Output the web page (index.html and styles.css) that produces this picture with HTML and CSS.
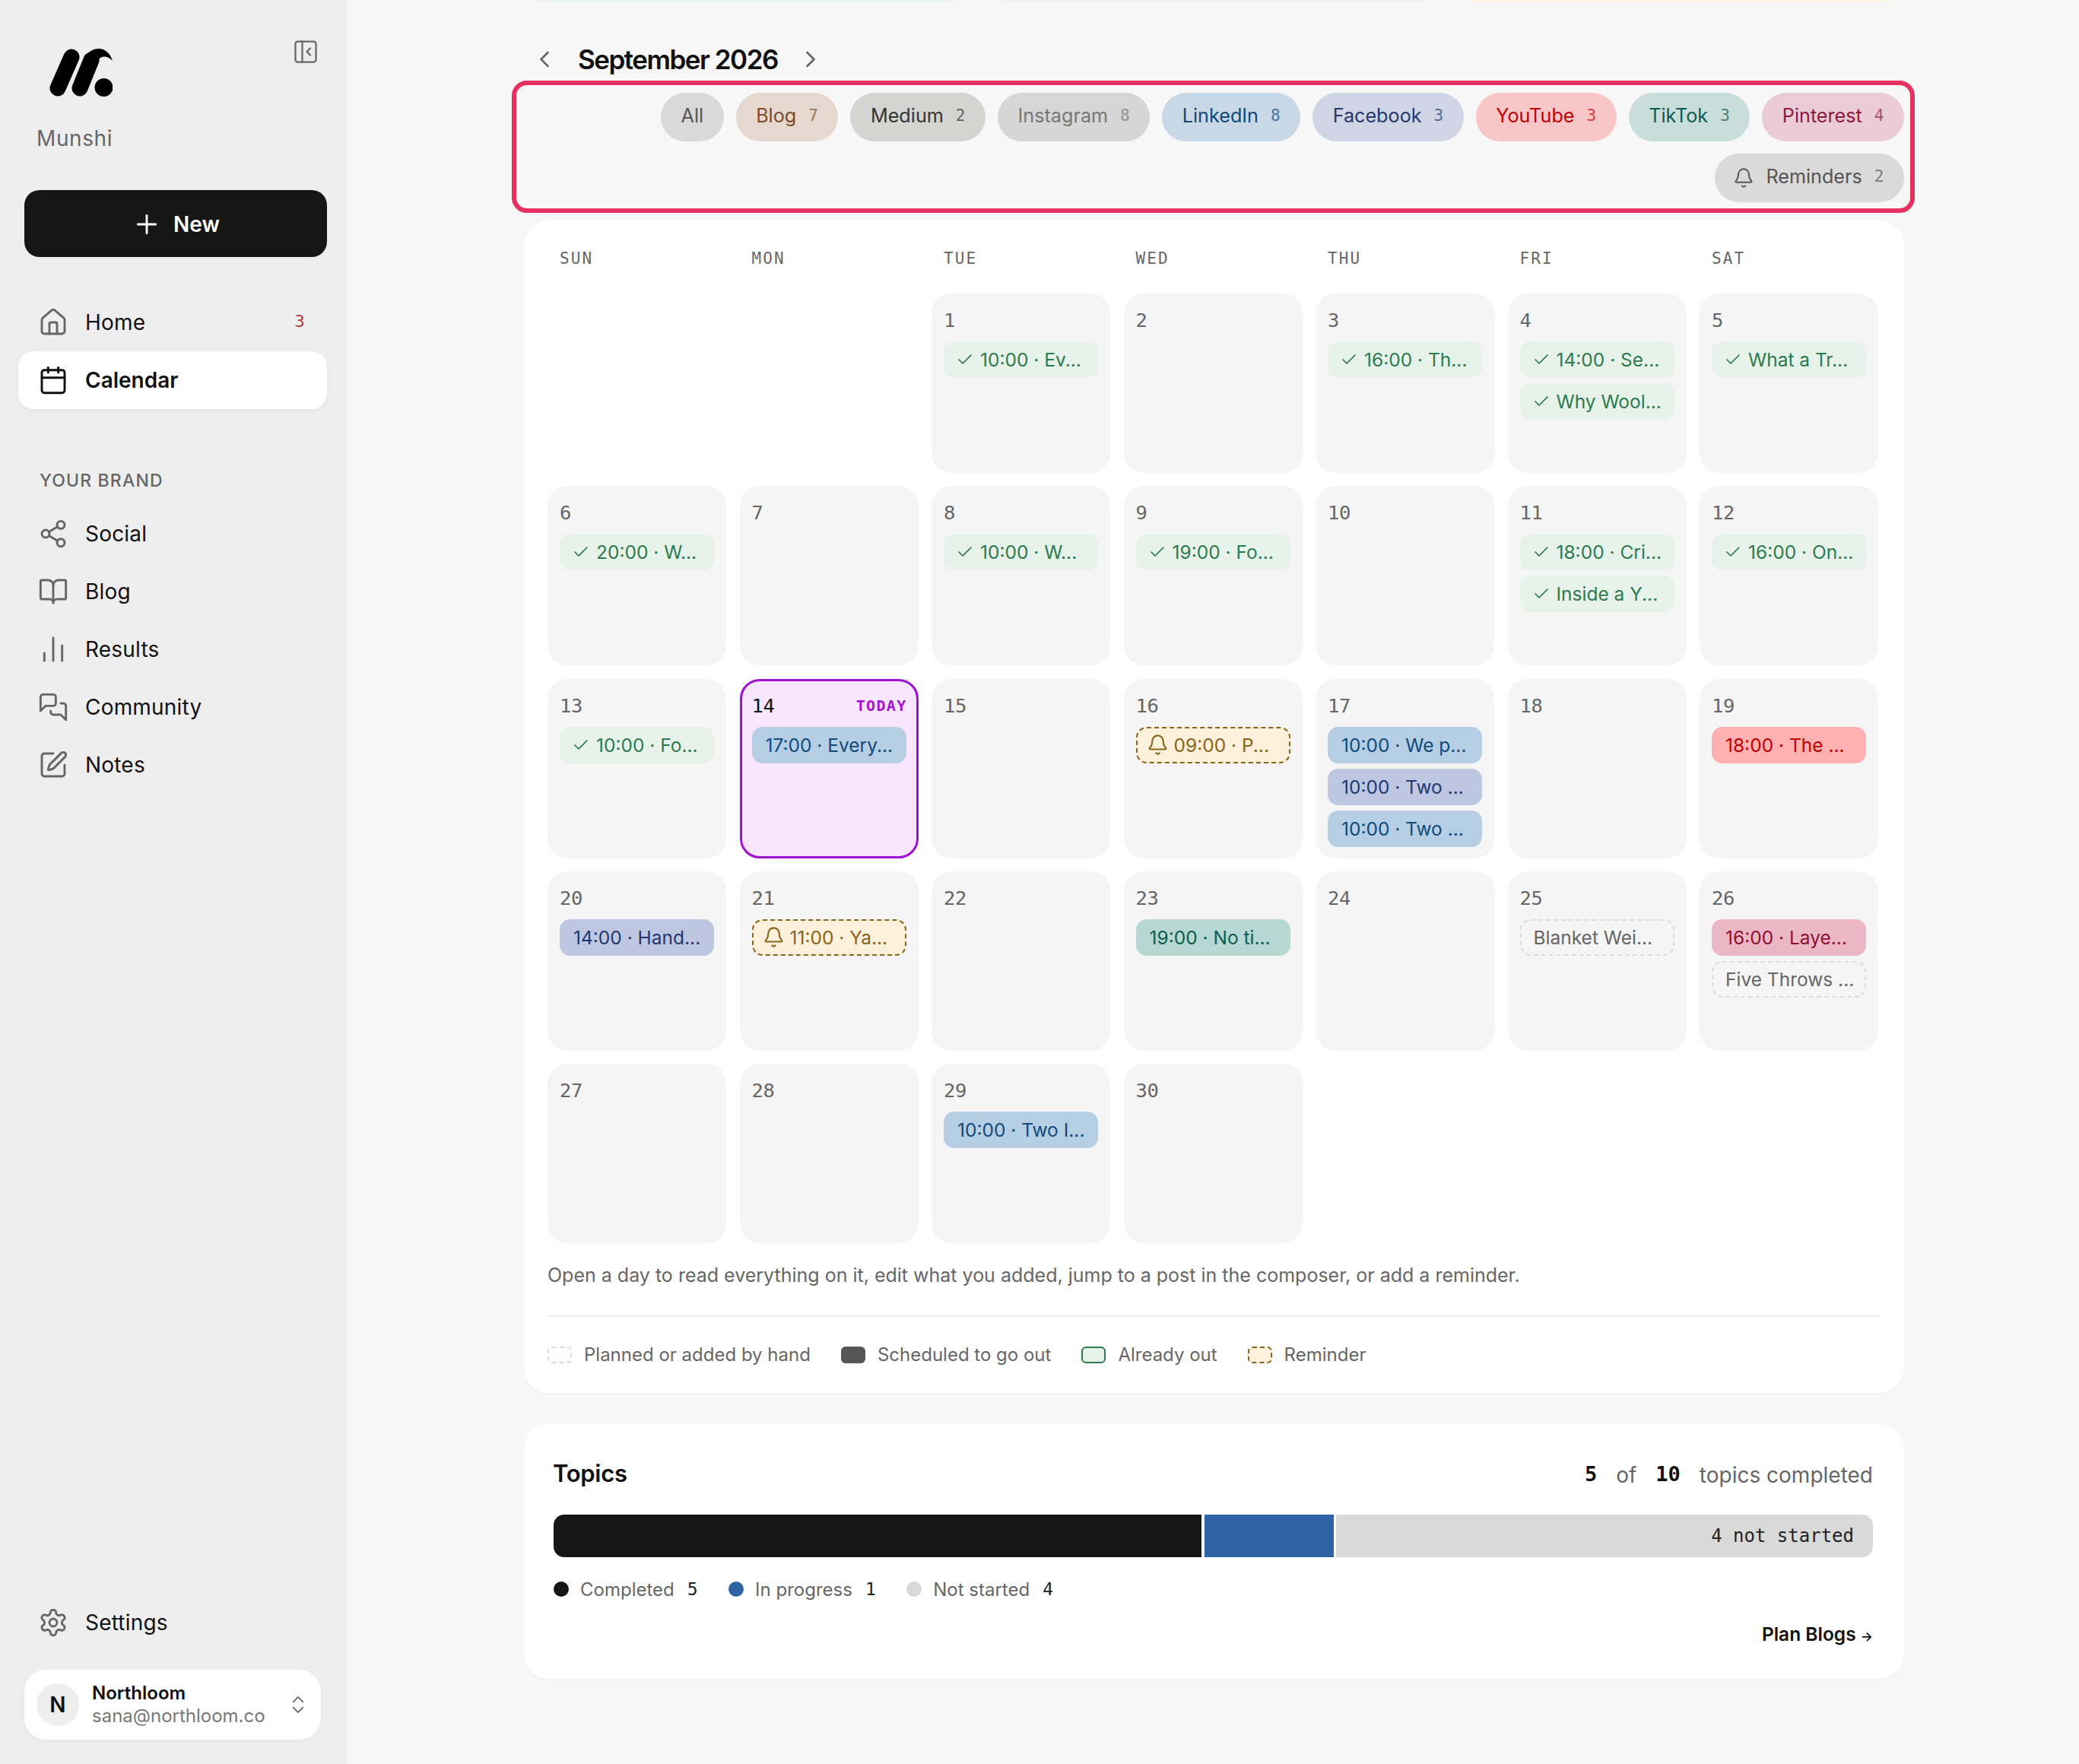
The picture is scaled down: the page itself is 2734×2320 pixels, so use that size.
FILE: index.html
```html
<!DOCTYPE html>
<html lang="en">
<head>
<meta charset="utf-8">
<title>Munshi Calendar</title>
<link rel="stylesheet" href="styles.css">
</head>
<body>
<svg class="defs" aria-hidden="true">
  <symbol id="i-home" viewBox="0 0 24 24"><path d="M15 21v-8a1 1 0 0 0-1-1h-4a1 1 0 0 0-1 1v8"/><path d="M3 10a2 2 0 0 1 .709-1.528l7-5.999a2 2 0 0 1 2.582 0l7 5.999A2 2 0 0 1 21 10v9a2 2 0 0 1-2 2H5a2 2 0 0 1-2-2z"/></symbol>
  <symbol id="i-cal" viewBox="0 0 24 24"><path d="M8 2v4"/><path d="M16 2v4"/><rect x="3" y="4" width="18" height="18" rx="2"/><path d="M3 10h18"/></symbol>
  <symbol id="i-share" viewBox="0 0 24 24"><circle cx="18" cy="5" r="3"/><circle cx="6" cy="12" r="3"/><circle cx="18" cy="19" r="3"/><path d="m8.59 13.51 6.83 3.98"/><path d="m15.41 6.51-6.82 3.98"/></symbol>
  <symbol id="i-book" viewBox="0 0 24 24"><path d="M12 7v14"/><path d="M3 18a1 1 0 0 1-1-1V4a1 1 0 0 1 1-1h5a4 4 0 0 1 4 4 4 4 0 0 1 4-4h5a1 1 0 0 1 1 1v13a1 1 0 0 1-1 1h-6a3 3 0 0 0-3 3 3 3 0 0 0-3-3z"/></symbol>
  <symbol id="i-chart" viewBox="0 0 24 24"><path d="M5 21v-6"/><path d="M12 21V3"/><path d="M19 21V9"/></symbol>
  <symbol id="i-msg" viewBox="0 0 24 24"><path d="M14 9a2 2 0 0 1-2 2H6l-4 4V4a2 2 0 0 1 2-2h8a2 2 0 0 1 2 2z"/><path d="M18 9h2a2 2 0 0 1 2 2v11l-4-4h-6a2 2 0 0 1-2-2v-1"/></symbol>
  <symbol id="i-pen" viewBox="0 0 24 24"><path d="M12 3H5a2 2 0 0 0-2 2v14a2 2 0 0 0 2 2h14a2 2 0 0 0 2-2v-7"/><path d="M18.375 2.625a1 1 0 0 1 3 3l-9.013 9.014a2 2 0 0 1-.853.505l-2.873.84a.5.5 0 0 1-.62-.62l.84-2.873a2 2 0 0 1 .506-.852z"/></symbol>
  <symbol id="i-gear" viewBox="0 0 24 24"><path d="M12.22 2h-.44a2 2 0 0 0-2 2v.18a2 2 0 0 1-1 1.73l-.43.25a2 2 0 0 1-2 0l-.15-.08a2 2 0 0 0-2.73.73l-.22.38a2 2 0 0 0 .73 2.73l.15.1a2 2 0 0 1 1 1.72v.51a2 2 0 0 1-1 1.74l-.15.09a2 2 0 0 0-.73 2.73l.22.38a2 2 0 0 0 2.73.73l.15-.08a2 2 0 0 1 2 0l.43.25a2 2 0 0 1 1 1.73V20a2 2 0 0 0 2 2h.44a2 2 0 0 0 2-2v-.18a2 2 0 0 1 1-1.73l.43-.25a2 2 0 0 1 2 0l.15.08a2 2 0 0 0 2.73-.73l.22-.39a2 2 0 0 0-.73-2.73l-.15-.08a2 2 0 0 1-1-1.74v-.5a2 2 0 0 1 1-1.74l.15-.09a2 2 0 0 0 .73-2.73l-.22-.38a2 2 0 0 0-2.73-.73l-.15.08a2 2 0 0 1-2 0l-.43-.25a2 2 0 0 1-1-1.73V4a2 2 0 0 0-2-2z"/><circle cx="12" cy="12" r="3"/></symbol>
  <symbol id="i-bell" viewBox="0 0 24 24"><path d="M10.268 21a2 2 0 0 0 3.464 0"/><path d="M3.262 15.326A1 1 0 0 0 4 17h16a1 1 0 0 0 .74-1.673C19.41 13.956 18 12.499 18 8A6 6 0 0 0 6 8c0 4.499-1.411 5.956-2.738 7.326"/></symbol>
  <symbol id="i-check" viewBox="0 0 24 24"><path d="M20 6 9 17l-5-5"/></symbol>
</svg>

<div class="app">
  <aside class="sidebar">
    <div class="brand">
      <div class="brand-id">
        <svg class="logo" viewBox="0 0 83 63" aria-label="Munshi logo">
          <path class="logo-stroke" d="M11 52 29 11"/>
          <path class="logo-stroke" d="M40 52 55 15"/>
          <path d="M47 10C52 3 59 0 65 0c8 0 15 6 18 16-7-7-14-7-19-1L50 40z"/>
          <circle cx="71.500" cy="51" r="12"/>
        </svg>
        <div class="brand-name">Munshi</div>
      </div>
      <svg class="ico collapse" viewBox="0 0 24 24"><rect x="3" y="3" width="18" height="18" rx="2"/><path d="M9 3v18"/><path d="m16 15-3-3 3-3"/></svg>
    </div>
    <button class="new-btn"><svg class="ico plus" viewBox="0 0 24 24"><path d="M5 12h14"/><path d="M12 5v14"/></svg><span>New</span></button>

    <nav class="nav">
      <a class="nav-item"><svg class="ico"><use href="#i-home"/></svg><span>Home</span><span class="nav-badge">3</span></a>
      <a class="nav-item active"><svg class="ico"><use href="#i-cal"/></svg><span>Calendar</span></a>
    </nav>

    <div class="nav-label">YOUR BRAND</div>
    <nav class="nav">
      <a class="nav-item"><svg class="ico"><use href="#i-share"/></svg><span>Social</span></a>
      <a class="nav-item"><svg class="ico"><use href="#i-book"/></svg><span>Blog</span></a>
      <a class="nav-item"><svg class="ico"><use href="#i-chart"/></svg><span>Results</span></a>
      <a class="nav-item"><svg class="ico"><use href="#i-msg"/></svg><span>Community</span></a>
      <a class="nav-item"><svg class="ico"><use href="#i-pen"/></svg><span>Notes</span></a>
    </nav>

    <nav class="nav nav-bottom">
      <a class="nav-item"><svg class="ico"><use href="#i-gear"/></svg><span>Settings</span></a>
    </nav>
    <div class="account">
      <div class="avatar">N</div>
      <div class="account-text">
        <div class="account-name">Northloom</div>
        <div class="account-mail">sana@northloom.co</div>
      </div>
      <svg class="ico updown" viewBox="0 0 24 24"><path d="m7 15 5 5 5-5"/><path d="m7 9 5-5 5 5"/></svg>
    </div>
  </aside>

  <main class="main">
    <div class="stat-row">
      <div class="stat stat-green"></div>
      <div class="stat stat-grey"></div>
      <div class="stat stat-yellow"></div>
    </div>

    <header class="month">
      <svg class="ico month-nav" viewBox="0 0 24 24"><path d="m15 18-6-6 6-6"/></svg>
      <h1 class="month-title">September 2026</h1>
      <svg class="ico month-nav" viewBox="0 0 24 24"><path d="m9 18 6-6-6-6"/></svg>
    </header>

    <div class="filters">
      <span class="pill p-all">All</span>
      <span class="pill p-blog">Blog<b>7</b></span>
      <span class="pill p-medium">Medium<b>2</b></span>
      <span class="pill p-insta">Instagram<b>8</b></span>
      <span class="pill p-li">LinkedIn<b>8</b></span>
      <span class="pill p-fb">Facebook<b>3</b></span>
      <span class="pill p-yt">YouTube<b>3</b></span>
      <span class="pill p-tt">TikTok<b>3</b></span>
      <span class="pill p-pin">Pinterest<b>4</b></span>
      <span class="pill p-rem"><svg class="ico pill-bell"><use href="#i-bell"/></svg>Reminders<b>2</b></span>
    </div>

    <section class="card cal-card">
      <div class="weekdays">
        <div>SUN</div><div>MON</div><div>TUE</div><div>WED</div><div>THU</div><div>FRI</div><div>SAT</div>
      </div>
      <div class="grid">
        <div></div><div></div>
        <div class="day"><div class="num">1</div><div class="ev done"><svg class="ico ev-check"><use href="#i-check"/></svg>10:00 · Ev...</div></div>
        <div class="day"><div class="num">2</div></div>
        <div class="day"><div class="num">3</div><div class="ev done"><svg class="ico ev-check"><use href="#i-check"/></svg>16:00 · Th...</div></div>
        <div class="day"><div class="num">4</div><div class="ev done"><svg class="ico ev-check"><use href="#i-check"/></svg>14:00 · Se...</div><div class="ev done"><svg class="ico ev-check"><use href="#i-check"/></svg>Why Wool...</div></div>
        <div class="day"><div class="num">5</div><div class="ev done"><svg class="ico ev-check"><use href="#i-check"/></svg>What a Tr...</div></div>

        <div class="day"><div class="num">6</div><div class="ev done"><svg class="ico ev-check"><use href="#i-check"/></svg>20:00 · W...</div></div>
        <div class="day"><div class="num">7</div></div>
        <div class="day"><div class="num">8</div><div class="ev done"><svg class="ico ev-check"><use href="#i-check"/></svg>10:00 · W...</div></div>
        <div class="day"><div class="num">9</div><div class="ev done"><svg class="ico ev-check"><use href="#i-check"/></svg>19:00 · Fo...</div></div>
        <div class="day"><div class="num">10</div></div>
        <div class="day"><div class="num">11</div><div class="ev done"><svg class="ico ev-check"><use href="#i-check"/></svg>18:00 · Cri...</div><div class="ev done"><svg class="ico ev-check"><use href="#i-check"/></svg>Inside a Y...</div></div>
        <div class="day"><div class="num">12</div><div class="ev done"><svg class="ico ev-check"><use href="#i-check"/></svg>16:00 · On...</div></div>

        <div class="day"><div class="num">13</div><div class="ev done"><svg class="ico ev-check"><use href="#i-check"/></svg>10:00 · Fo...</div></div>
        <div class="day today"><div class="num"><span>14</span><span class="today-tag">TODAY</span></div><div class="ev li">17:00 · Every...</div></div>
        <div class="day"><div class="num">15</div></div>
        <div class="day"><div class="num">16</div><div class="ev rem"><svg class="ico ev-bell"><use href="#i-bell"/></svg>09:00 · P...</div></div>
        <div class="day"><div class="num">17</div><div class="ev li">10:00 · We p...</div><div class="ev fb">10:00 · Two ...</div><div class="ev li">10:00 · Two ...</div></div>
        <div class="day"><div class="num">18</div></div>
        <div class="day"><div class="num">19</div><div class="ev yt">18:00 · The ...</div></div>

        <div class="day"><div class="num">20</div><div class="ev fb">14:00 · Hand...</div></div>
        <div class="day"><div class="num">21</div><div class="ev rem"><svg class="ico ev-bell"><use href="#i-bell"/></svg>11:00 · Ya...</div></div>
        <div class="day"><div class="num">22</div></div>
        <div class="day"><div class="num">23</div><div class="ev tt">19:00 · No ti...</div></div>
        <div class="day"><div class="num">24</div></div>
        <div class="day"><div class="num">25</div><div class="ev plan">Blanket Wei...</div></div>
        <div class="day"><div class="num">26</div><div class="ev pin">16:00 · Laye...</div><div class="ev plan">Five Throws ...</div></div>

        <div class="day"><div class="num">27</div></div>
        <div class="day"><div class="num">28</div></div>
        <div class="day"><div class="num">29</div><div class="ev li">10:00 · Two I...</div></div>
        <div class="day"><div class="num">30</div></div>
      </div>

      <p class="note">Open a day to read everything on it, edit what you added, jump to a post in the composer, or add a reminder.</p>
      <div class="key">
        <span class="key-item"><i class="sw sw-plan"></i>Planned or added by hand</span>
        <span class="key-item"><i class="sw sw-sched"></i>Scheduled to go out</span>
        <span class="key-item"><i class="sw sw-out"></i>Already out</span>
        <span class="key-item"><i class="sw sw-rem"></i>Reminder</span>
      </div>
    </section>

    <section class="card topics">
      <div class="topics-head">
        <h2 class="topics-title">Topics</h2>
        <div class="topics-count"><b>5</b><span>of</span><b>10</b><span>topics completed</span></div>
      </div>
      <div class="bar">
        <div class="seg seg-done"></div>
        <div class="seg seg-prog"></div>
        <div class="seg seg-rest">4 not started</div>
      </div>
      <div class="topics-key">
        <span class="tk"><i class="dot dot-done"></i>Completed<b>5</b></span>
        <span class="tk"><i class="dot dot-prog"></i>In progress<b>1</b></span>
        <span class="tk"><i class="dot dot-rest"></i>Not started<b>4</b></span>
      </div>
      <div class="plan-row"><a class="plan-link">Plan Blogs <span class="plan-arrow">→</span></a></div>
    </section>
  </main>
</div>
</body>
</html>
```
FILE: styles.css
```css
* { box-sizing: border-box; }
html, body { margin: 0; padding: 0; }
body {
  font-family: Inter, "Liberation Sans", sans-serif;
  color: #111;
  background: #f7f7f7;
}
.defs { position: absolute; width: 0; height: 0; }
.ico {
  width: 40px;
  height: 40px;
  fill: none;
  stroke: #666;
  stroke-width: 1.75;
  stroke-linecap: round;
  stroke-linejoin: round;
  flex: none;
}
.app { display: flex; min-height: 2320px; }

/* Sidebar */
.sidebar {
  width: 456px;
  flex: none;
  height: 2320px;
  background: #eeeeee;
  display: flex;
  flex-direction: column;
  padding: 0 26px 32px 24px;
}
.brand { display: flex; justify-content: space-between; align-items: flex-start; padding: 50px 10px 0 24px; }
.brand-id { display: flex; flex-direction: column; padding-top: 14px; }
.logo { width: 83px; height: 63px; margin-left: 17px; display: block; fill: #000; }
.logo-stroke { fill: none; stroke: #000; stroke-width: 21; stroke-linecap: round; }
.brand-name { margin-top: 35px; font-size: 28px; letter-spacing: 0.6px; line-height: 40px; color: #666; }
.collapse { width: 36px; height: 36px; stroke-width: 1.5; margin-top: 0; }
.new-btn {
  margin: 48px 0 0 8px;
  width: 398px;
  height: 88px;
  border: 0;
  border-radius: 20px;
  background: #161616;
  color: #fff;
  font: 600 28px Inter, sans-serif;
  display: flex;
  align-items: center;
  justify-content: center;
  gap: 15px;
  padding: 2px 0 0;
}
.plus { stroke: #fff; }
.nav { display: flex; flex-direction: column; }
.new-btn + .nav { margin-top: 48px; }
.nav-item {
  height: 76px;
  display: flex;
  align-items: center;
  gap: 22px;
  padding: 0 31px 0 26px;
  font-size: 28px;
  letter-spacing: 0.2px;
  color: #111;
  border-radius: 20px;
}
.nav-item.active { background: #fff; font-weight: 600; letter-spacing: 0; box-shadow: 0 2px 6px rgba(0,0,0,.05); }
.nav-item.active .ico { stroke: #111; }
.nav-badge { margin-left: auto; margin-right: -2px; margin-top: -4px; font: 22px "DejaVu Sans Mono", monospace; color: #b03a3a; }
.nav-label {
  margin: 74px 0 12px 28px;
  height: 40px;
  line-height: 40px;
  font-size: 23px;
  font-weight: 500;
  letter-spacing: 1.150px;
  color: #666;
}
.nav-bottom { margin-top: auto; }
.account {
  margin: 24px 8px 0 8px;
  height: 92px;
  background: #fff;
  border-radius: 28px;
  display: flex;
  align-items: center;
  padding: 0 15px 0 16px;
  box-shadow: 0 2px 6px rgba(0,0,0,.04);
}
.avatar {
  width: 56px;
  height: 56px;
  border-radius: 50%;
  background: #eee;
  display: flex;
  align-items: center;
  justify-content: center;
  font-size: 28px;
  font-weight: 600;
  flex: none;
}
.account-text { margin-left: 17px; flex: 1; }
.account-name { font-size: 24px; font-weight: 600; line-height: 30px; }
.account-mail { font-size: 24px; line-height: 30px; color: #777; }
.updown { width: 30px; height: 30px; stroke: #777; stroke-width: 1.6; }

/* Main */
.main { flex: 1; padding: 0 230px 0 233px; min-width: 0; }
.stat-row { display: flex; gap: 64px; height: 2px; padding: 0 19px 0 16px; }
.stat { flex: 1; }
.stat-green { background: #e6f4ea; }
.stat-grey { background: #efefef; }
.stat-yellow { background: #fdf2dc; }
.month { display: flex; align-items: center; height: 60px; margin-top: 46px; }
.month-nav { width: 36px; height: 36px; }
.month-nav:first-child { margin-left: 9px; }
.month-title {
  margin: 0 25px 0 26px;
  font-size: 35px;
  font-weight: 600;
  letter-spacing: -1.500px;
  line-height: 60px;
  color: #111;
}
.filters {
  margin: -2px -14px 0 -16px;
  border: 6px solid #e6305f;
  border-radius: 20px;
  padding: 10px 8px 8px 8px;
  display: flex;
  flex-wrap: wrap;
  justify-content: flex-end;
  gap: 16px;
}
.pill {
  height: 64px;
  padding: 0 26.500px 4px;
  border-radius: 32px;
  display: inline-flex;
  align-items: center;
  font-size: 25.200px;
  white-space: nowrap;
}
.pill b { font: 400 21px "DejaVu Sans Mono", monospace; margin-left: 16px; opacity: .7; }
.p-all { background: #d9d9d9; color: #555; }
.p-blog { background: #e6d8cf; color: #7a4a2a; }
.p-medium { background: #d4d4d2; color: #333; }
.p-insta { background: #d6d6d6; color: #777; }
.p-li { background: #c8d8e6; color: #0f4a7a; }
.p-fb { background: #d0d5e6; color: #24386f; }
.p-yt { background: #f8c6c6; color: #c00000; }
.p-tt { background: #c9deda; color: #0d5c50; }
.p-pin { background: #ebcbd5; color: #8e1a3e; }
.p-rem { background: #dadada; color: #555; }
.pill-bell { width: 28px; height: 28px; stroke: #555; margin-right: 15px; margin-left: -2px; margin-top: 4px; }

.card { background: #fff; border-radius: 32px; box-shadow: 0 1px 3px rgba(0,0,0,.04); }
.cal-card { margin-top: 10px; padding: 30px 32px 30px 31px; }
.weekdays { display: grid; grid-template-columns: repeat(7, 235px); column-gap: 17.500px; height: 36px; margin-bottom: 30px; padding-top: 2px; }
.weekdays div { padding-left: 16px; font: 21px/36px "DejaVu Sans Mono", monospace; letter-spacing: 2.100px; color: #666; }
.grid { display: grid; grid-template-columns: repeat(7, 235px); grid-auto-rows: 236px; column-gap: 17.500px; row-gap: 17.250px; }
.day { background: #f5f5f5; border-radius: 26px; padding: 18px 16px 0; min-width: 0; }
.num {
  display: flex;
  justify-content: space-between;
  align-items: center;
  height: 34px;
  margin-bottom: 11px;
  font: 25.500px/34px "DejaVu Sans Mono", monospace;
  letter-spacing: -0.4px;
  color: #666;
}
.today { background: #f7e6fd; border: 3px solid #a010d0; padding: 15px 13px 0; }
.today .num { color: #111; }
.today-tag { font: 700 20px "DejaVu Sans Mono", monospace; color: #a413d1; letter-spacing: 1.300px; margin-right: -1px; }
.ev {
  height: 48px;
  border-radius: 14px;
  padding: 0 18px;
  margin-bottom: 7px;
  display: flex;
  align-items: center;
  font-size: 24.500px;
  white-space: nowrap;
  overflow: hidden;
}
.done { background: #e7f3ea; color: #2d7a4f; padding-left: 16px; }
.li { background: #b6cee4; color: #0f4a7a; }
.fb { background: #bdc7e1; color: #24386f; }
.yt { background: #ffb0b0; color: #c00000; }
.tt { background: #b6d7d3; color: #0d5c50; }
.pin { background: #ecb7c5; color: #8e1033; }
.rem { background: #fdf1dc; color: #8a6418; border: 2px dashed #8a6418; padding: 0 12.500px; }
.plan { color: #666; border: 2px dashed #dcdcdc; padding: 0 16px; }
.ev-check { width: 24px; height: 24px; stroke: #2d7a4f; margin-right: 8px; }
.ev-bell { width: 29px; height: 29px; stroke: #8a6418; margin-right: 6.500px; }

.note { margin: 22px 0 0; font-size: 25px; line-height: 40px; color: #666; }
.key {
  margin-top: 33px;
  border-top: 2px solid #f2f2f2;
  padding-top: 30px;
  display: flex;
  gap: 40px;
  height: 72px;
}
.key-item { display: flex; align-items: center; gap: 16px; font-size: 24px; line-height: 40px; color: #666; }
.sw { width: 32px; height: 22px; border-radius: 6px; display: block; flex: none; }
.sw-plan { border: 2px dashed #dcdcdc; }
.sw-sched { background: #555; }
.sw-out { background: #e7f3ea; border: 2px solid #2d7a4f; }
.sw-rem { background: #fdf1dc; border: 2px dashed #8a6418; }

.topics { margin-top: 40px; padding: 44px 41px 39px 39px; }
.topics-head { display: flex; justify-content: space-between; align-items: center; height: 44px; }
.topics-title { margin: -2px 0 0 -1px; font-size: 31px; font-weight: 600; letter-spacing: -0.3px; }
.topics-count { display: flex; align-items: center; gap: 25px; font-size: 28px; color: #666; padding-top: 3px; }
.topics-count b { font: 700 27px "DejaVu Sans Mono", monospace; color: #111; margin-top: -3px; }
.bar { margin-top: 32px; height: 56px; display: flex; gap: 3.500px; border-radius: 14px; overflow: hidden; }
.seg { height: 100%; }
.seg-done { width: 852px; background: #161616; }
.seg-prog { width: 170px; background: #2b63a5; }
.seg-rest {
  flex: 1;
  background: #d9d9d9;
  font: 24px/56px "DejaVu Sans Mono", monospace;
  color: #222;
  text-align: right;
  padding-right: 25px;
}
.topics-key { margin-top: 22px; height: 40px; display: flex; gap: 40.500px; }
.tk { display: flex; align-items: center; font-size: 24px; color: #666; }
.tk b { font: 400 23px "DejaVu Sans Mono", monospace; color: #222; margin-left: 17px; }
.dot { width: 20px; height: 20px; border-radius: 50%; margin-right: 15px; display: block; }
.dot-done { background: #161616; }
.dot-prog { background: #2b63a5; }
.dot-rest { background: #d9d9d9; }
.plan-row { margin-top: 19px; height: 40px; display: flex; justify-content: flex-end; align-items: center; }
.plan-link { font-size: 24.500px; font-weight: 600; color: #111; }
.plan-arrow { font-size: 17px; }
```
